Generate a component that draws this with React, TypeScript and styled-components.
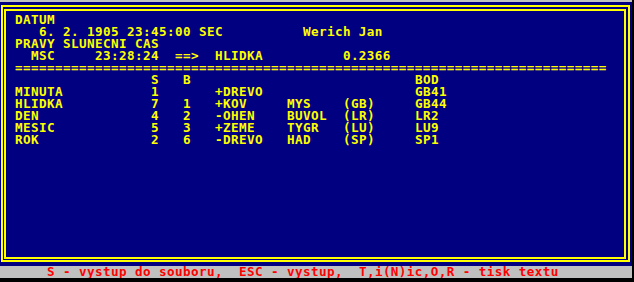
import styled, { createGlobalStyle } from "styled-components";

const GlobalStyle = createGlobalStyle`
    html, body {
        margin: 0;
        padding: 0;
        background: #000000;
    }
`;

// one text cell of the old 80x25 screen is 8px wide and 12px high
const CELL = 8;

const Screen = styled.div`
    width: 632px;
    height: 278px;
    display: flex;
    flex-direction: column;
    font-family: "DejaVu Sans Mono", "Liberation Mono", monospace;
    font-size: 12.6px;
    letter-spacing: 0.415px;
    font-weight: bold;
    line-height: 12px;
`;

const TopStrip = styled.div`
    height: 2px;
    background: #c0c0c0;
`;

const Desk = styled.div`
    flex: 1;
    background: #000080;
    padding: 3px 2px 4px 1px;
    display: flex;
`;

const OuterFrame = styled.div`
    flex: 1;
    border: 2px solid #ffff00;
    padding: 2px 2px 1px 1px;
    display: flex;
`;

const InnerFrame = styled.div`
    flex: 1;
    border: 2px solid #ffff00;
    padding: 3px 0 0 9px;
    color: #ffff00;
`;

const Line = styled.div`
    white-space: pre;
    height: 12px;
`;

const Row = styled.div`
    display: flex;
    height: 12px;
    white-space: pre;
`;

const Cell = styled.span<{ $w?: number }>`
    width: ${p => (p.$w ? `${p.$w * CELL}px` : "auto")};
    flex: none;
`;

const StatusBar = styled.div`
    height: 12px;
    background: #c0c0c0;
    color: #ff0000;
    white-space: pre;
    padding-left: 47px;
`;

interface ICycle {
    name: string;
    s: string;
    b: string;
    element: string;
    animal: string;
    code: string;
    bod: string;
}

const widths = [17, 4, 4, 9, 7, 9];

const cycles: ICycle[] = [
    { name: "MINUTA", s: "1", b: "", element: "+DREVO", animal: "", code: "", bod: "GB41" },
    { name: "HLIDKA", s: "7", b: "1", element: "+KOV", animal: "MYS", code: "(GB)", bod: "GB44" },
    { name: "DEN", s: "4", b: "2", element: "-OHEN", animal: "BUVOL", code: "(LR)", bod: "LR2" },
    { name: "MESIC", s: "5", b: "3", element: "+ZEME", animal: "TYGR", code: "(LU)", bod: "LU9" },
    { name: "ROK", s: "2", b: "6", element: "-DREVO", animal: "HAD", code: "(SP)", bod: "SP1" },
];

function App() {
    return (
        <>
            <GlobalStyle />
            <Screen>
                <TopStrip />
                <Desk>
                    <OuterFrame>
                        <InnerFrame>
                            <Line>DATUM</Line>
                            <Line>{"   6. 2. 1905 23:45:00 SEC          Werich Jan"}</Line>
                            <Line>PRAVY SLUNECNI CAS</Line>
                            <Line>{"  MSC     23:28:24  ==>  HLIDKA          0.2366"}</Line>
                            <Line>{"=".repeat(74)}</Line>
                            <Row>
                                <Cell $w={widths[0]}></Cell>
                                <Cell $w={widths[1]}>S</Cell>
                                <Cell $w={widths[2]}>B</Cell>
                                <Cell $w={widths[3]}></Cell>
                                <Cell $w={widths[4]}></Cell>
                                <Cell $w={widths[5]}></Cell>
                                <Cell>BOD</Cell>
                            </Row>
                            {cycles.map(c => (
                                <Row key={c.name}>
                                    <Cell $w={widths[0]}>{c.name}</Cell>
                                    <Cell $w={widths[1]}>{c.s}</Cell>
                                    <Cell $w={widths[2]}>{c.b}</Cell>
                                    <Cell $w={widths[3]}>{c.element}</Cell>
                                    <Cell $w={widths[4]}>{c.animal}</Cell>
                                    <Cell $w={widths[5]}>{c.code}</Cell>
                                    <Cell>{c.bod}</Cell>
                                </Row>
                            ))}
                        </InnerFrame>
                    </OuterFrame>
                </Desk>
                <StatusBar>{"S - vystup do souboru,  ESC - vystup,  T,i(N)ic,O,R - tisk textu"}</StatusBar>
            </Screen>
        </>
    );
}

export default App;
